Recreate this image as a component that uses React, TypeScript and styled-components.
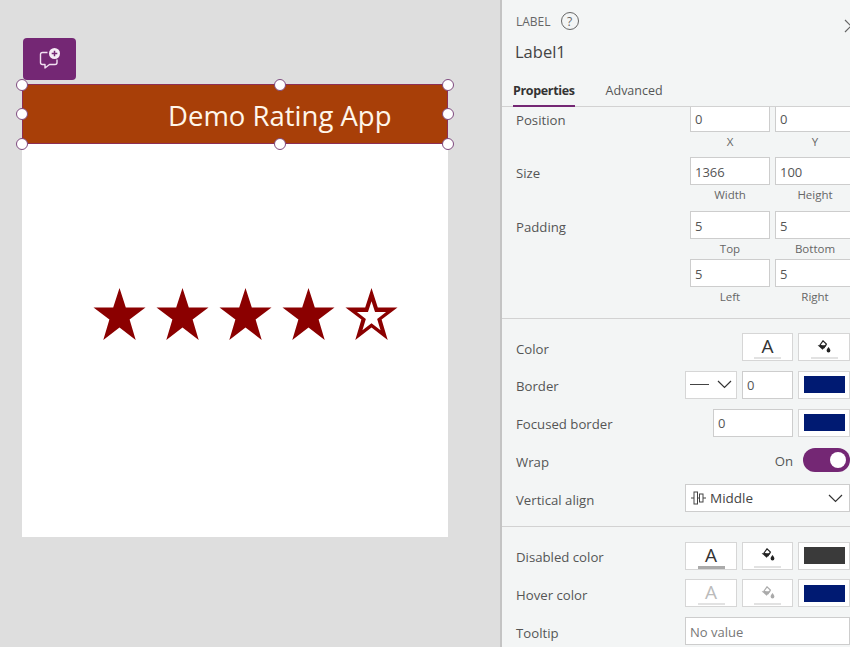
import React from 'react'
import styled, { createGlobalStyle } from 'styled-components'

const GlobalStyle = createGlobalStyle`
  html, body {
    margin: 0;
    padding: 0;
    height: 100%;
    overflow: hidden;
    font-family: "Open Sans", "Noto Sans", sans-serif;
  }
`

const PURPLE = '#742774'
const NAVY = '#001a72'

const Page = styled.div`
  display: grid;
  grid-template-columns: 500px 350px;
  width: 850px;
  height: 647px;
  overflow: hidden;
  background: #dedede;
`

const Stage = styled.div`
  display: flex;
  flex-direction: column;
  padding: 38px 52px 0 22px;
`

const CommentButton = styled.div`
  display: flex;
  align-items: center;
  justify-content: center;
  width: 53px;
  height: 42px;
  margin: 0 0 4px 1px;
  border-radius: 4px;
  background: ${PURPLE};
`

const AppCanvas = styled.div`
  display: flex;
  flex-direction: column;
  width: 426px;
  height: 453px;
  background: #fff;
`

const TitleBar = styled.div`
  position: relative;
  display: flex;
  align-items: center;
  box-sizing: border-box;
  height: 60px;
  padding: 2px 0 0 145px;
  background: #a83f08;
  border: 1px solid #8d2f55;
  color: #fff6ea;
  font-size: 27.5px;
  white-space: nowrap;
`

const Handle = styled.span<{ $x: number; $y: number }>`
  position: absolute;
  left: ${({ $x }) => $x - 7}px;
  top: ${({ $y }) => $y - 7}px;
  width: 10px;
  height: 10px;
  border-radius: 50%;
  background: #fff;
  border: 1px solid #7f4a7f;
`

const StarRow = styled.div`
  display: flex;
  gap: 10px;
  padding: 144px 0 0 71px;
`

const Panel = styled.div`
  display: flex;
  flex-direction: column;
  box-sizing: border-box;
  height: 647px;
  overflow: hidden;
  background: #f3f5f5;
  border-left: 2px solid #c4c4c4;
  color: #555;
  font-size: 13.2px;
`

const PanelHead = styled.div`
  flex: none;
  height: 107px;
  box-sizing: border-box;
  padding: 10px 0 0 14px;
  border-bottom: 1px solid #d2d2d2;
`

const TypeRow = styled.div`
  display: flex;
  align-items: center;
  gap: 10px;
  height: 22px;
  font-size: 12px;
  color: #666;
`

const HelpMark = styled.span`
  display: flex;
  align-items: center;
  justify-content: center;
  box-sizing: border-box;
  width: 18px;
  height: 18px;
  border: 1px solid #666;
  border-radius: 50%;
  font-size: 12px;
`

const CloseMark = styled.span`
  display: flex;
  margin-left: auto;
  margin-right: -8px;
  margin-top: 10px;
`

const ControlName = styled.div`
  height: 22px;
  margin: 9px 0 0 -1px;
  font-size: 16.5px;
  line-height: 22px;
  color: #444;
`

const Tabs = styled.div`
  display: flex;
  gap: 31px;
  height: 34px;
  margin: 10px 0 0 -3px;
`

const Tab = styled.div<{ $active?: boolean }>`
  box-sizing: border-box;
  height: 34px;
  padding-top: 9px;
  font-size: 12.5px;
  line-height: 18px;
  font-weight: ${({ $active }) => ($active ? 700 : 400)};
  color: ${({ $active }) => ($active ? '#333' : '#555')};
  border-bottom: ${({ $active }) => ($active ? `2px solid ${PURPLE}` : 'none')};
  letter-spacing: ${({ $active }) => ($active ? '-0.35px' : '0')};
`

const Scroller = styled.div`
  flex: 1;
  min-height: 0;
  overflow: hidden;
`

const Section = styled.div<{ $last?: boolean }>`
  display: flex;
  flex-direction: column;
  padding: ${({ $last }) => ($last ? '14.5px 0 0 14px' : '14px 0 14px 14px')};
  gap: 9.8px;
  border-bottom: ${({ $last }) => ($last ? 'none' : '1px solid #d2d2d2')};
`

const Layout = styled.div`
  display: flex;
  flex-direction: column;
  box-sizing: border-box;
  height: 215px;
  margin-top: -3px;
  padding-left: 14px;
  border-bottom: 1px solid #d2d2d2;
`

const LayoutRow = styled.div<{ $gap: number }>`
  display: flex;
  justify-content: space-between;
  margin-bottom: ${({ $gap }) => $gap}px;
`

const RowLabel = styled.span`
  padding-top: 1.5px;
  line-height: 28px;
  white-space: nowrap;
`

const Pairs = styled.div`
  display: grid;
  grid-template-columns: 80px 80px;
  column-gap: 5px;
  margin-right: -5px;
`

const Caption = styled.span`
  height: 20px;
  font-size: 11.5px;
  line-height: 20px;
  text-align: center;
  color: #666;
`

const Field = styled.div<{ $width?: number; $muted?: boolean }>`
  display: flex;
  align-items: center;
  box-sizing: border-box;
  width: ${({ $width }) => ($width ? `${$width}px` : 'auto')};
  height: 28px;
  padding: 1px 4px 0;
  background: #fff;
  border: 1px solid #cdcdcd;
  font-size: 13px;
  color: ${({ $muted }) => ($muted ? '#777' : '#555')};
`

const Row = styled.div`
  display: flex;
  justify-content: space-between;
  height: 28px;
`

const Controls = styled.div`
  display: flex;
  align-items: center;
  gap: 5px;
`

const Tile = styled.div<{ $width?: number }>`
  display: flex;
  flex-direction: column;
  align-items: center;
  justify-content: center;
  box-sizing: border-box;
  width: ${({ $width }) => $width ?? 52}px;
  height: 28px;
  background: #fff;
  border: 1px solid #d6d6d6;
`

const ToolTile = styled(Tile)`
  justify-content: flex-start;
  padding-top: 2px;
`

const GlyphSlot = styled.span`
  display: flex;
  align-items: center;
  justify-content: center;
  height: 20px;
  margin-bottom: 1px;
`

const Swatch = styled.span<{ $color: string }>`
  width: 41px;
  height: 17px;
  background: ${({ $color }) => $color};
`

const GlyphA = styled.span<{ $faded?: boolean }>`
  font-size: 19px;
  line-height: 20px;
  color: ${({ $faded }) => ($faded ? '#bbb' : '#333')};
`

const Underline = styled.span<{ $color?: string; $thick?: boolean }>`
  width: 27px;
  height: ${({ $thick }) => ($thick ? 3 : 2)}px;
  background: ${({ $color }) => $color ?? '#e2e2e2'};
`

const BorderPicker = styled(Tile)`
  flex-direction: row;
  gap: 8px;
`

const LineSample = styled.span`
  width: 19px;
  height: 1px;
  background: #444;
`

const SwitchLabel = styled.span`
  margin-right: 5px;
  padding-top: 1px;
  color: #555;
`

const Switch = styled.div`
  display: flex;
  align-items: center;
  justify-content: flex-end;
  box-sizing: border-box;
  width: 47px;
  height: 24px;
  padding-right: 4px;
  border-radius: 12px;
  background: ${PURPLE};
`

const SwitchKnob = styled.span`
  width: 16px;
  height: 16px;
  border-radius: 50%;
  background: #fff;
`

const SelectBox = styled(Field)`
  gap: 4px;
  padding: 0 6px 0 5px;
  font-size: 13.5px;
  color: #444;
`

const ChevronSlot = styled.span`
  display: flex;
  margin-left: auto;
`

const STAR = 'M26.5 0l6.3 19.5h19.7L36.6 31.6 42.7 52 26.5 39.4 10.3 52l6.1-20.4L.5 19.5h19.7z'

const Star = ({ hollow }: { hollow?: boolean }) => (
  <svg width="53" height="52" viewBox="0 0 53 52">
    <path fill="#8b0000" d={STAR} />
    {hollow && <path fill="#fff" d={STAR} transform="translate(26.5 30) scale(.56) translate(-26.5 -30)" />}
  </svg>
)

const CommentPlus = () => (
  <svg width="24" height="24" viewBox="0 0 24 24" fill="none">
    <path
      d="M9.5 5.5H4.5a2 2 0 0 0-2 2v8a2 2 0 0 0 2 2h2.5v3.5l4.5-3.5h5.5a2 2 0 0 0 2-2v-3"
      stroke="#f1dff1"
      strokeWidth="1.4"
      strokeLinejoin="round"
    />
    <circle cx="16.5" cy="6.5" r="5.5" fill="#f6ecf6" />
    <path d="M16.5 3.7v5.6M13.7 6.5h5.6" stroke={PURPLE} strokeWidth="1.5" />
  </svg>
)

const Chevron = () => (
  <svg width="15" height="9" viewBox="0 0 15 9" fill="none">
    <path d="M1 1l6.5 6.5L14 1" stroke="#333" strokeWidth="1.2" />
  </svg>
)

const Bucket = ({ color }: { color: string }) => (
  <svg width="14" height="13" viewBox="0 0 14 13">
    <path fill="none" stroke={color} strokeWidth="1.2" d="M6 .8L3 5l4 2.6L9.4 4z" />
    <path fill={color} d="M.6 5.2h9L5.6 9.8z" />
    <path fill={color} d="M11.5 7c1.1 1.6 1.9 2.6 1.9 3.6a1.9 1.9 0 0 1-3.8 0c0-1 .8-2 1.9-3.6z" />
  </svg>
)

const MiddleIcon = () => (
  <svg width="15" height="14" viewBox="0 0 15 14" fill="none" stroke="#444" strokeWidth="1">
    <path d="M0 7h15" />
    <rect x="3" y="1" width="3.5" height="12" fill="#fff" />
    <rect x="8.5" y="3" width="3.5" height="8" fill="#fff" />
  </svg>
)

const CloseIcon = () => (
  <svg width="14" height="14" viewBox="0 0 14 14" fill="none">
    <path d="M1 1l12 12M13 1L1 13" stroke="#666" strokeWidth="1.2" />
  </svg>
)

const handles = [
  [0, 1], [258, 1], [426, 1],
  [0, 30], [426, 30],
  [0, 60], [258, 60], [426, 60],
]

export default function App() {
  return (
    <Page>
      <GlobalStyle />
      <Stage>
        <CommentButton>
          <CommentPlus />
        </CommentButton>
        <AppCanvas>
          <TitleBar>
            Demo Rating App
            {handles.map(([x, y]) => (
              <Handle key={`${x}-${y}`} $x={x} $y={y} />
            ))}
          </TitleBar>
          <StarRow>
            <Star />
            <Star />
            <Star />
            <Star />
            <Star hollow />
          </StarRow>
        </AppCanvas>
      </Stage>

      <Panel>
        <PanelHead>
          <TypeRow>
            LABEL
            <HelpMark>?</HelpMark>
            <CloseMark>
              <CloseIcon />
            </CloseMark>
          </TypeRow>
          <ControlName>Label1</ControlName>
          <Tabs>
            <Tab $active>Properties</Tab>
            <Tab>Advanced</Tab>
          </Tabs>
        </PanelHead>

        <Scroller>
          <Layout>
            <LayoutRow $gap={5}>
              <RowLabel>Position</RowLabel>
              <Pairs>
                <Field>0</Field>
                <Field>0</Field>
                <Caption>X</Caption>
                <Caption>Y</Caption>
              </Pairs>
            </LayoutRow>
            <LayoutRow $gap={6}>
              <RowLabel>Size</RowLabel>
              <Pairs>
                <Field>1366</Field>
                <Field>100</Field>
                <Caption>Width</Caption>
                <Caption>Height</Caption>
              </Pairs>
            </LayoutRow>
            <LayoutRow $gap={0}>
              <RowLabel>Padding</RowLabel>
              <Pairs>
                <Field>5</Field>
                <Field>5</Field>
                <Caption>Top</Caption>
                <Caption>Bottom</Caption>
                <Field>5</Field>
                <Field>5</Field>
                <Caption>Left</Caption>
                <Caption>Right</Caption>
              </Pairs>
            </LayoutRow>
          </Layout>

          <Section>
            <Row>
              <RowLabel>Color</RowLabel>
              <Controls>
                <ToolTile $width={51}>
                  <GlyphSlot>
                    <GlyphA>A</GlyphA>
                  </GlyphSlot>
                  <Underline />
                </ToolTile>
                <ToolTile>
                  <GlyphSlot>
                    <Bucket color="#222" />
                  </GlyphSlot>
                  <Underline />
                </ToolTile>
              </Controls>
            </Row>
            <Row>
              <RowLabel>Border</RowLabel>
              <Controls>
                <BorderPicker>
                  <LineSample />
                  <Chevron />
                </BorderPicker>
                <Field $width={51}>0</Field>
                <Tile>
                  <Swatch $color={NAVY} />
                </Tile>
              </Controls>
            </Row>
            <Row>
              <RowLabel>Focused border</RowLabel>
              <Controls>
                <Field $width={80}>0</Field>
                <Tile>
                  <Swatch $color={NAVY} />
                </Tile>
              </Controls>
            </Row>
            <Row>
              <RowLabel>Wrap</RowLabel>
              <Controls>
                <SwitchLabel>On</SwitchLabel>
                <Switch>
                  <SwitchKnob />
                </Switch>
              </Controls>
            </Row>
            <Row>
              <RowLabel>Vertical align</RowLabel>
              <SelectBox $width={165}>
                <MiddleIcon />
                Middle
                <ChevronSlot>
                  <Chevron />
                </ChevronSlot>
              </SelectBox>
            </Row>
          </Section>

          <Section $last>
            <Row>
              <RowLabel>Disabled color</RowLabel>
              <Controls>
                <ToolTile>
                  <GlyphSlot>
                    <GlyphA>A</GlyphA>
                  </GlyphSlot>
                  <Underline $color="#aaa" $thick />
                </ToolTile>
                <ToolTile $width={51}>
                  <GlyphSlot>
                    <Bucket color="#222" />
                  </GlyphSlot>
                  <Underline />
                </ToolTile>
                <Tile>
                  <Swatch $color="#3a3a3a" />
                </Tile>
              </Controls>
            </Row>
            <Row>
              <RowLabel>Hover color</RowLabel>
              <Controls>
                <ToolTile>
                  <GlyphSlot>
                    <GlyphA $faded>A</GlyphA>
                  </GlyphSlot>
                  <Underline />
                </ToolTile>
                <ToolTile $width={51}>
                  <GlyphSlot>
                    <Bucket color="#aaa" />
                  </GlyphSlot>
                  <Underline />
                </ToolTile>
                <Tile>
                  <Swatch $color={NAVY} />
                </Tile>
              </Controls>
            </Row>
            <Row>
              <RowLabel>Tooltip</RowLabel>
              <Field $width={165} $muted>
                No value
              </Field>
            </Row>
          </Section>
        </Scroller>
      </Panel>
    </Page>
  )
}
